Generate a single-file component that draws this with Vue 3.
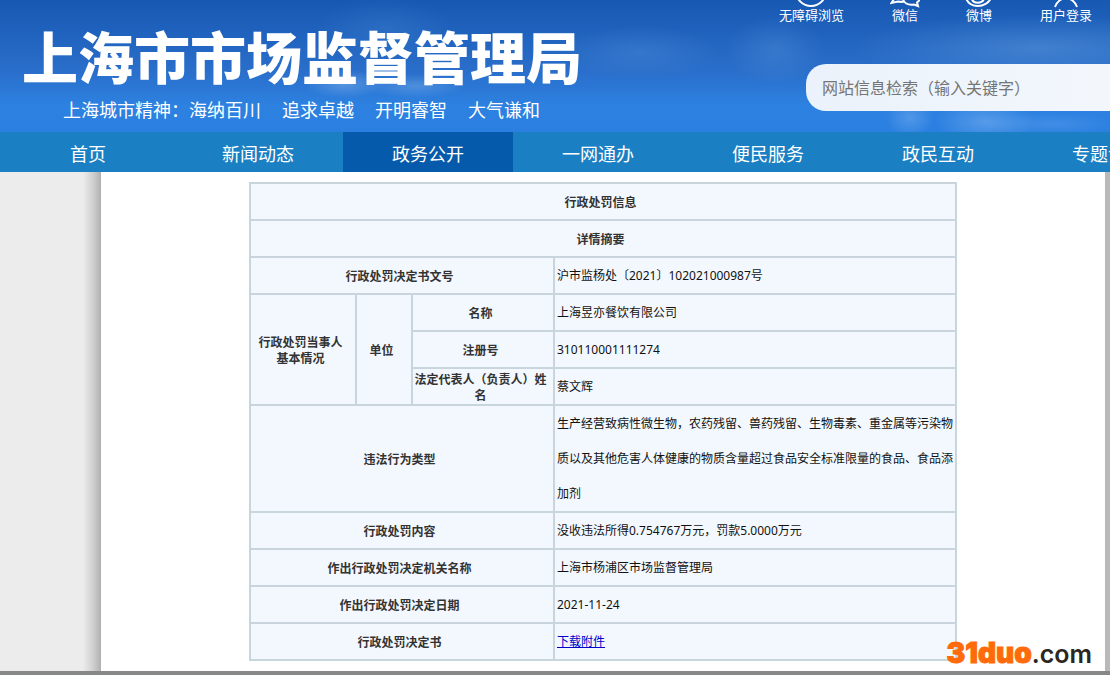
<script setup>
const mottos = ['追求卓越', '开明睿智', '大气谦和']
const navItems = ['首页', '新闻动态', '政务公开', '一网通办', '便民服务', '政民互动', '专题专栏']
const activeItem = '政务公开'
</script>

<template>
  <div class="page">
    <header class="banner">
      <div class="brand">
        <h1>上海市市场监督管理局</h1>
        <p class="motto">
          <span>上海城市精神：海纳百川</span>
          <span v-for="m in mottos" :key="m">{{ m }}</span>
        </p>
      </div>
      <div class="tools">
        <div class="quick">
          <a href="#">
            <svg viewBox="0 0 30 8" aria-hidden="true"><circle cx="15" cy="-9" r="15" /></svg>
            无障碍浏览
          </a>
          <a href="#">
            <svg viewBox="0 0 30 8" aria-hidden="true"><path d="M4 -1 1.500 3 8 1.500C10 2 12 2 14 1.500M13 -2C13 3 18 5.500 24 4.500L28 6 27 2.500C29 1 30 0 30 -2" /></svg>
            微信
          </a>
          <a href="#">
            <svg viewBox="0 0 30 8" aria-hidden="true"><path d="M2 -2C4 4 9 6 14 6S25 3 27 -2" /><path d="M8 -1C9 4 18 4 20 -1" /></svg>
            微博
          </a>
          <a href="#">
            <svg viewBox="0 0 30 8" aria-hidden="true"><path d="M4 7C5 4 7 1 11 -1M19 -1C23 1 25 4 26 7" /></svg>
            用户登录
          </a>
        </div>
        <input class="search" type="search" aria-label="网站信息检索" placeholder="网站信息检索（输入关键字）" />
      </div>
    </header>

    <nav class="nav">
      <a v-for="item in navItems" :key="item" href="#" :class="{ active: item === activeItem }">{{ item }}</a>
    </nav>

    <main class="body">
      <div class="sheet">
        <table>
          <colgroup>
            <col class="c1" />
            <col class="c2" />
            <col class="c3" />
            <col class="c4" />
          </colgroup>
          <tbody>
            <tr><th colspan="4">行政处罚信息</th></tr>
            <tr><th colspan="4">详情摘要</th></tr>
            <tr><th colspan="3">行政处罚决定书文号</th><td>沪市监杨处〔2021〕102021000987号</td></tr>
            <tr>
              <th rowspan="3">行政处罚当事人<br />基本情况</th>
              <th rowspan="3">单位</th>
              <th>名称</th>
              <td>上海昱亦餐饮有限公司</td>
            </tr>
            <tr><th>注册号</th><td>310110001111274</td></tr>
            <tr><th>法定代表人（负责人）姓名</th><td>蔡文辉</td></tr>
            <tr>
              <th colspan="3">违法行为类型</th>
              <td>生产经营致病性微生物，农药残留、兽药残留、生物毒素、重金属等污染物质以及其他危害人体健康的物质含量超过食品安全标准限量的食品、食品添加剂</td>
            </tr>
            <tr><th colspan="3">行政处罚内容</th><td>没收违法所得0.754767万元，罚款5.0000万元</td></tr>
            <tr><th colspan="3">作出行政处罚决定机关名称</th><td>上海市杨浦区市场监督管理局</td></tr>
            <tr><th colspan="3">作出行政处罚决定日期</th><td>2021-11-24</td></tr>
            <tr><th colspan="3">行政处罚决定书</th><td><a href="#">下载附件</a></td></tr>
          </tbody>
        </table>
      </div>
    </main>
    <div class="watermark"><b>31duo</b><span>.com</span></div>
  </div>
</template>

<style>
body {
  margin: 0;
}
</style>

<style scoped>
.page {
  position: relative;
  display: flex;
  flex-direction: column;
  box-sizing: border-box;
  min-height: 100vh;
  overflow: hidden;
  border-bottom: 4px solid #868887;
  background: #ececec;
  font-family: "Noto Sans", "Noto Sans CJK SC", sans-serif;
}
.banner {
  display: flex;
  justify-content: space-between;
  height: 132px;
  color: #fff;
  background:
    radial-gradient(ellipse 50px 22px at 985px 122px, rgba(150, 195, 245, 0.4), transparent),
    radial-gradient(ellipse 24px 20px at 910px 118px, rgba(150, 195, 245, 0.35), transparent),
    radial-gradient(ellipse 70px 12px at 1050px 124px, rgba(150, 195, 245, 0.2), transparent),
    radial-gradient(ellipse 190px 34px at 1040px 48px, rgba(110, 165, 225, 0.4), transparent),
    radial-gradient(ellipse 50px 34px at 775px 50px, rgba(90, 150, 220, 0.35), transparent),
    radial-gradient(ellipse 80px 26px at 640px 52px, rgba(90, 150, 220, 0.3), transparent),
    radial-gradient(ellipse 40px 14px at 345px 84px, rgba(130, 180, 235, 0.5), transparent),
    radial-gradient(ellipse 50px 12px at 415px 86px, rgba(130, 180, 235, 0.4), transparent),
    radial-gradient(ellipse 70px 30px at 385px 28px, rgba(80, 145, 215, 0.25), transparent),
    linear-gradient(#1758b2, #2a6fcb 55%, #2d81e1 80%, #2a7fe0);
}
.brand {
  flex: none;
  padding: 25px 0 0 22px;
}
h1 {
  margin: 0;
  font-family: "Noto Sans CJK SC", sans-serif;
  font-size: 56px;
  font-weight: 900;
  line-height: 60px;
}
.motto {
  display: flex;
  gap: 21px;
  margin: 10px 0 0 41px;
  font-family: "Noto Sans CJK SC", sans-serif;
  font-size: 18px;
  line-height: 28px;
}
.tools {
  display: flex;
  flex-direction: column;
  width: 304px;
}
.quick {
  display: flex;
  justify-content: flex-end;
  gap: 48px;
  height: 64px;
  padding-right: 18px;
}
.quick a {
  display: flex;
  flex: none;
  flex-direction: column;
  align-items: center;
  color: #fff;
  font-size: 13px;
  line-height: 14px;
  text-decoration: none;
}
.quick svg {
  width: 30px;
  height: 8px;
  margin: 0 -2px;
  fill: none;
  stroke: #fff;
  stroke-width: 2;
}
.search {
  box-sizing: border-box;
  width: 100%;
  height: 47px;
  padding: 0 16px 2px;
  border: 0;
  border-radius: 20px 0 0 20px;
  outline: 0;
  background: linear-gradient(90deg, #ebf2fb, #f3f7fc);
  font-family: "Noto Sans CJK SC", sans-serif;
  font-size: 16px;
  appearance: none;
}
.search::placeholder {
  color: #757575;
}
.nav {
  display: flex;
  height: 40px;
  padding-left: 3px;
  overflow: hidden;
  background: #1b7fc3;
}
.nav a {
  flex: none;
  width: 170px;
  color: #fff;
  font-size: 18px;
  line-height: 44px;
  text-align: center;
  text-decoration: none;
}
.nav .active {
  background: #065aab;
}
.body {
  display: flex;
  flex: 1;
  padding: 0 5px 0 83px;
  background: linear-gradient(#b9b9b9, #b9b9b9) right / 5px 100% no-repeat;
}
.body::before {
  flex: none;
  width: 18px;
  background: linear-gradient(90deg, #ececec, #d0d0d0 55%, #b0b0b0);
  content: "";
}
.sheet {
  flex: 1;
  padding: 10px 148px;
  background: #fff;
}
table {
  width: 100%;
  border-collapse: collapse;
  table-layout: fixed;
  background: #f3f8fe;
  font-size: 12px;
}
.c1 {
  width: 106px;
}
.c2 {
  width: 56px;
}
.c3 {
  width: 142px;
}
th,
td {
  height: 35px;
  padding: 0 2px;
  border: 2px solid #c8d5dd;
}
th {
  height: 33px;
  padding: 2px 5px 0 0;
  color: #333;
  font-weight: 600;
  line-height: 16px;
}
td {
  color: #111;
  line-height: 35px;
}
td a {
  color: #00c;
}
.watermark {
  position: absolute;
  right: 18px;
  bottom: 1px;
  color: #2b2620;
  font-family: Inter, sans-serif;
  font-size: 25px;
  line-height: 32px;
}
.watermark b {
  color: #ff6b0a;
  font-size: 28px;
  font-weight: 900;
  -webkit-text-stroke: 1px #ff6b0a;
}
.watermark span {
  font-weight: 600;
}
</style>
